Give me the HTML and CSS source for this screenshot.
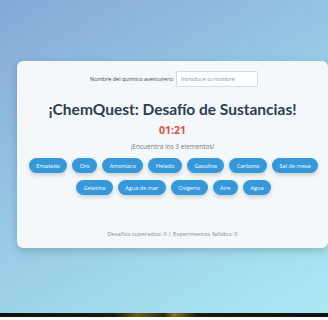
FILE: index.html
```html
<!DOCTYPE html>
<html lang="es">
<head>
    <meta charset="UTF-8">
    <meta name="viewport" content="width=device-width, initial-scale=1.0">
    <title>ChemQuest</title>
    <link rel="stylesheet" href="styles.css">
</head>
<body>
<div class="stage">
    <div class="game-container">
        <div class="player-row">
            <label for="player-name">Nombre del químico aventurero:</label>
            <input type="text" id="player-name" placeholder="Introduce tu nombre">
        </div>
        <h1>¡ChemQuest: Desafío de Sustancias!</h1>
        <div class="timer">01:21</div>
        <p class="instructions">¡Encuentra los 3 elementos!</p>
        <div class="substances">
            <button class="substance">Ensalada</button>
            <button class="substance">Oro</button>
            <button class="substance">Amoniaco</button>
            <button class="substance">Helado</button>
            <button class="substance">Gasolina</button>
            <button class="substance">Carbono</button>
            <button class="substance">Sal de mesa</button>
            <button class="substance">Gelatina</button>
            <button class="substance">Agua de mar</button>
            <button class="substance">Oxígeno</button>
            <button class="substance">Aire</button>
            <button class="substance">Agua</button>
        </div>
        <div class="stats">Desafíos superados: 0 | Experimentos fallidos: 0</div>
    </div>
</div>
<div class="taskbar"></div>
</body>
</html>
```

FILE: styles.css
```css
/* Page */
html, body {
    height: 100%;
}

body {
    margin: 0;
    font-family: "Open Sans", "Noto Sans", sans-serif;
    background: #ffffff;
    display: flex;
    flex-direction: column;
}

.stage {
    flex: 1;
    background: linear-gradient(150deg, #86a9d8 0%, #98cbe6 50%, #aaeaf4 100%);
    padding: 61px 0 0 17px;
}

/* Card */
.game-container {
    width: 311px;
    height: 187px;
    box-sizing: border-box;
    background-color: #f4f8fb;
    border-radius: 6px;
    box-shadow: 0 3px 8px rgba(0, 0, 0, 0.18);
    padding-top: 10px;
    text-align: center;
    color: #2c3e50;
}

/* Name row */
.player-row {
    display: flex;
    justify-content: center;
    align-items: center;
    gap: 2px;
    font-size: 5.5px;
    color: #444;
    padding-left: 3px;
}

.player-row input {
    width: 82px;
    height: 16px;
    box-sizing: border-box;
    border: 1px solid #d6dbe0;
    border-radius: 2px;
    background: #fff;
    padding: 0 4px;
    font-family: inherit;
    font-size: 5.5px;
}

.player-row input::placeholder {
    color: #8a8f94;
}

/* Heading */
h1 {
    margin: 10px 0 0;
    font-family: "Lato", "Open Sans", sans-serif;
    font-size: 15.5px;
    line-height: 24px;
    font-weight: 700;
    color: #2c3e50;
}

.timer {
    margin-top: 2px;
    font-size: 10.5px;
    line-height: 14px;
    font-weight: 700;
    color: #e74c3c;
}

.instructions {
    margin: 5px 0 0;
    font-size: 6.5px;
    line-height: 10px;
    color: #6f7b80;
}

/* Substance buttons */
.substances {
    display: flex;
    flex-wrap: wrap;
    justify-content: center;
    gap: 7px 5px;
    margin: 6px 6px 0 8px;
}

.substance {
    height: 15px;
    padding: 0 7.5px;
    border: none;
    border-radius: 8px;
    background-color: #3498db;
    color: #fff;
    font-family: inherit;
    font-size: 5.6px;
    box-shadow: 0 2px 4px rgba(0, 0, 0, 0.18);
    cursor: pointer;
}

.substance:hover {
    background-color: #2980b9;
}

/* Stats */
.stats {
    margin-top: 35px;
    font-size: 5.8px;
    color: #7f8c8d;
}

/* Dark strip at the bottom */
.taskbar {
    height: 4px;
    margin-bottom: 3px;
    background: linear-gradient(90deg, #111 0%, #1b1b12 35%, #6b5a1a 42%, #2a2614 50%, #8a7020 53%, #1a1a10 60%, #111 100%);
}
```
